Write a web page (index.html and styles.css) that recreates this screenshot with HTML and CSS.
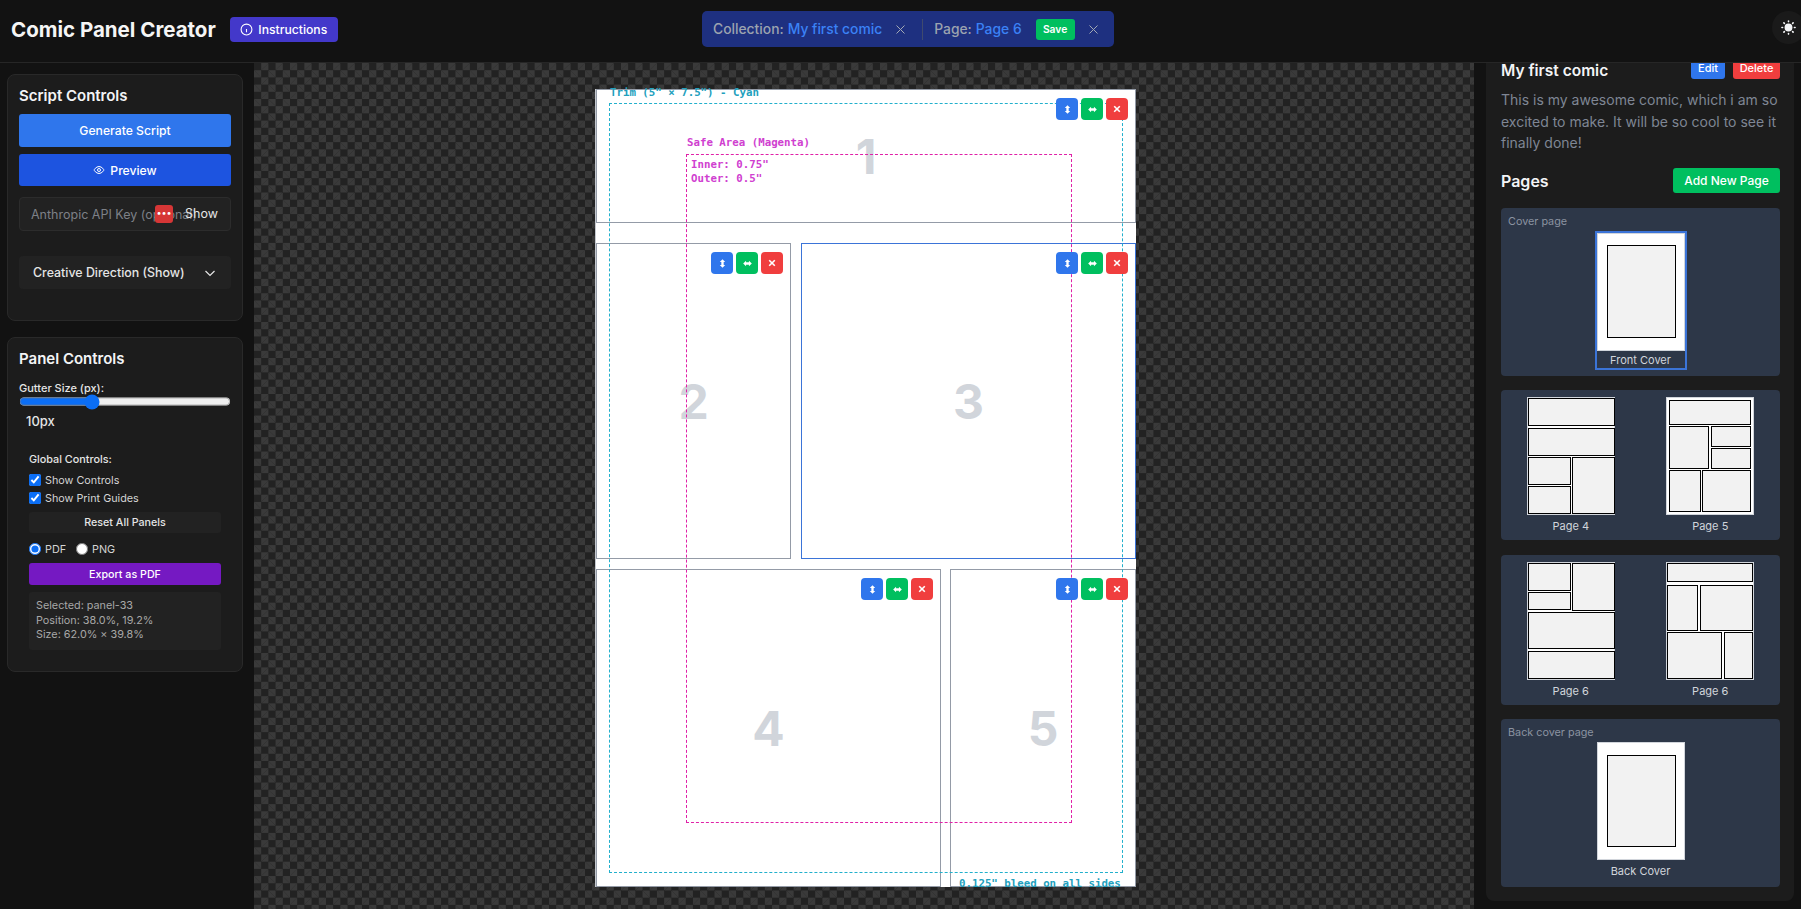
FILE: index.html
```html
<!DOCTYPE html>
<html>
<head>
    <meta charset="utf-8">
    <title>Comic Panel Creator</title>
    <link rel="stylesheet" href="styles.css">
</head>
<body>
    <svg class="sprites" width="0" height="0">
        <symbol id="i-vert" viewBox="0 0 10 10"><path d="M5 .2 8 3.400H6.300v3.200H8L5 9.800 2 6.600h1.700V3.400H2z" fill="#fff"/></symbol>
        <symbol id="i-horiz" viewBox="0 0 10 10"><path d="M.2 5 3.400 2v1.700h3.200V2L9.800 5 6.600 8V6.300H3.400V8z" fill="#fff"/></symbol>
        <symbol id="i-close" viewBox="0 0 10 10"><path d="M1.500 1.500l7 7M8.500 1.500l-7 7" stroke="#fff" stroke-width="2"/></symbol>
    </svg>

    <header class="topbar">
        <div class="brand">
            <h1>Comic Panel Creator</h1>
            <button class="btn-instructions">
                <svg width="13" height="13" viewBox="0 0 24 24" fill="none" stroke="#fff" stroke-width="2"><circle cx="12" cy="12" r="10"/><path d="M12 17v-6M12 8h.01"/></svg>
                Instructions
            </button>
        </div>
        <div class="context-bar">
            <span class="ctx-label">Collection:</span>
            <span class="ctx-value">My first comic</span>
            <svg class="ctx-x" width="9" height="9" viewBox="0 0 9 9"><path d="M.5.500l8 8M8.500.500l-8 8" stroke="#a3a9b5" stroke-width="1"/></svg>
            <span class="ctx-divider"></span>
            <span class="ctx-label">Page:</span>
            <span class="ctx-value">Page 6</span>
            <button class="btn-save">Save</button>
            <svg class="ctx-x" width="9" height="9" viewBox="0 0 9 9"><path d="M.5.500l8 8M8.500.500l-8 8" stroke="#a3a9b5" stroke-width="1"/></svg>
        </div>
        <button class="btn-theme">
            <svg width="15" height="15" viewBox="0 0 24 24" fill="#f3f4f6" stroke="#f3f4f6" stroke-width="2.600" stroke-linecap="round"><circle cx="12" cy="12" r="5"/><path d="M12 1.500v1M12 21.500v1M1.500 12h1M21.500 12h1M4.600 4.600l.8.8M18.600 18.600l.8.8M4.600 19.400l.8-.8M18.600 5.400l.8-.8"/></svg>
        </button>
    </header>

    <div class="workspace">
        <aside class="sidebar-left">
            <section class="card card-script">
                <h2>Script Controls</h2>
                <button class="btn-wide btn-generate">Generate Script</button>
                <button class="btn-wide btn-preview">
                    <svg width="12" height="12" viewBox="0 0 24 24" fill="none" stroke="#fff" stroke-width="2"><path d="M2 12s4-7 10-7 10 7 10 7-4 7-10 7-10-7-10-7z"/><circle cx="12" cy="12" r="3"/></svg>
                    Preview
                </button>
                <div class="api-key">
                    <span class="api-placeholder">Anthropic API Key (optional)</span>
                    <span class="api-dots">•••</span>
                    <span class="api-show">Show</span>
                </div>
                <div class="creative">
                    <span>Creative Direction (Show)</span>
                    <svg width="12" height="12" viewBox="0 0 12 12" fill="none" stroke="#e5e5e5" stroke-width="1.200"><path d="M1.500 4 6 8.500 10.500 4"/></svg>
                </div>
            </section>

            <section class="card card-panel">
                <h2>Panel Controls</h2>
                <label class="gutter-label">Gutter Size (px):</label>
                <input class="gutter" type="range" min="0" max="30" value="10">
                <div class="gutter-value">10px</div>
                <div class="global">
                    <div class="global-title">Global Controls:</div>
                    <label class="check"><input type="checkbox" checked> Show Controls</label>
                    <label class="check"><input type="checkbox" checked> Show Print Guides</label>
                    <button class="btn-reset">Reset All Panels</button>
                    <div class="formats">
                        <label class="check"><input type="radio" name="fmt" checked> PDF</label>
                        <label class="check"><input type="radio" name="fmt"> PNG</label>
                    </div>
                    <button class="btn-export">Export as PDF</button>
                    <div class="info">
                        <div>Selected: panel-33</div>
                        <div>Position: 38.0%, 19.2%</div>
                        <div>Size: 62.0% × 39.8%</div>
                    </div>
                </div>
            </section>
        </aside>

        <main class="canvas">
            <div class="sheet">
                <div class="panel" style="left:0;top:0;width:540px;height:134px">
                    <div class="panel-tools">
                        <button class="tool tool-v"><svg width="9" height="9"><use href="#i-vert"/></svg></button>
                        <button class="tool tool-h"><svg width="9" height="9"><use href="#i-horiz"/></svg></button>
                        <button class="tool tool-x"><svg width="8" height="8"><use href="#i-close"/></svg></button>
                    </div>
                    <span class="panel-num">1</span>
                </div>
                <div class="panel" style="left:0;top:154px;width:195px;height:316px">
                    <div class="panel-tools">
                        <button class="tool tool-v"><svg width="9" height="9"><use href="#i-vert"/></svg></button>
                        <button class="tool tool-h"><svg width="9" height="9"><use href="#i-horiz"/></svg></button>
                        <button class="tool tool-x"><svg width="8" height="8"><use href="#i-close"/></svg></button>
                    </div>
                    <span class="panel-num">2</span>
                </div>
                <div class="panel panel-selected" style="left:205px;top:154px;width:335px;height:316px">
                    <div class="panel-tools">
                        <button class="tool tool-v"><svg width="9" height="9"><use href="#i-vert"/></svg></button>
                        <button class="tool tool-h"><svg width="9" height="9"><use href="#i-horiz"/></svg></button>
                        <button class="tool tool-x"><svg width="8" height="8"><use href="#i-close"/></svg></button>
                    </div>
                    <span class="panel-num">3</span>
                </div>
                <div class="panel" style="left:0;top:480px;width:345px;height:318px">
                    <div class="panel-tools">
                        <button class="tool tool-v"><svg width="9" height="9"><use href="#i-vert"/></svg></button>
                        <button class="tool tool-h"><svg width="9" height="9"><use href="#i-horiz"/></svg></button>
                        <button class="tool tool-x"><svg width="8" height="8"><use href="#i-close"/></svg></button>
                    </div>
                    <span class="panel-num">4</span>
                </div>
                <div class="panel" style="left:354px;top:480px;width:186px;height:318px">
                    <div class="panel-tools">
                        <button class="tool tool-v"><svg width="9" height="9"><use href="#i-vert"/></svg></button>
                        <button class="tool tool-h"><svg width="9" height="9"><use href="#i-horiz"/></svg></button>
                        <button class="tool tool-x"><svg width="8" height="8"><use href="#i-close"/></svg></button>
                    </div>
                    <span class="panel-num">5</span>
                </div>

                <div class="guide-trim"></div>
                <div class="guide-safe"></div>
                <span class="guide-text trim-label">Trim (5" × 7.5") - Cyan</span>
                <span class="guide-text bleed-label">0.125" bleed on all sides</span>
                <span class="guide-text safe-label">Safe Area (Magenta)</span>
                <span class="guide-text safe-inner">Inner: 0.75"<br>Outer: 0.5"</span>
            </div>
        </main>

        <aside class="sidebar-right">
            <section class="collection">
                <div class="collection-head">
                    <h2>My first comic</h2>
                    <div class="collection-actions">
                        <button class="btn-small btn-edit">Edit</button>
                        <button class="btn-small btn-delete">Delete</button>
                    </div>
                </div>
                <p class="collection-desc">This is my awesome comic, which i am so excited to make. It will be so cool to see it finally done!</p>
                <div class="pages-head">
                    <h2>Pages</h2>
                    <button class="btn-add">Add New Page</button>
                </div>

                <div class="spread spread-cover">
                    <div class="spread-title">Cover page</div>
                    <div class="thumb-wrap thumb-current">
                        <div class="thumb"><i style="left:9px;top:11px;width:69px;height:93px"></i></div>
                        <div class="thumb-name">Front Cover</div>
                    </div>
                </div>

                <div class="spread spread-two">
                    <div class="thumb-wrap">
                        <div class="thumb">
                            <i style="left:0;top:0;width:87.300px;height:28px"></i>
                            <i style="left:0;top:30px;width:87.300px;height:28px"></i>
                            <i style="left:0;top:59px;width:43px;height:28px"></i>
                            <i style="left:0;top:88px;width:43px;height:28.300px"></i>
                            <i style="left:44px;top:59px;width:43.300px;height:57.400px"></i>
                        </div>
                        <div class="thumb-name">Page 4</div>
                    </div>
                    <div class="thumb-wrap">
                        <div class="thumb">
                            <i style="left:2px;top:2px;width:82px;height:24.600px"></i>
                            <i style="left:2px;top:28px;width:40px;height:43.200px"></i>
                            <i style="left:44px;top:28px;width:40px;height:21px"></i>
                            <i style="left:44px;top:50px;width:40px;height:21px"></i>
                            <i style="left:2px;top:72.200px;width:32px;height:41.800px"></i>
                            <i style="left:35px;top:72.200px;width:49px;height:41.800px"></i>
                        </div>
                        <div class="thumb-name">Page 5</div>
                    </div>
                </div>

                <div class="spread spread-two">
                    <div class="thumb-wrap">
                        <div class="thumb">
                            <i style="left:0;top:0;width:43px;height:28px"></i>
                            <i style="left:44px;top:0;width:43.300px;height:48.200px"></i>
                            <i style="left:0;top:29px;width:43px;height:18.200px"></i>
                            <i style="left:0;top:49.300px;width:87.300px;height:36.800px"></i>
                            <i style="left:0;top:88px;width:87.300px;height:28px"></i>
                        </div>
                        <div class="thumb-name">Page 6</div>
                    </div>
                    <div class="thumb-wrap">
                        <div class="thumb">
                            <i style="left:0;top:0;width:86px;height:19.200px"></i>
                            <i style="left:0;top:22.300px;width:31px;height:45.900px"></i>
                            <i style="left:33px;top:22.300px;width:53px;height:45.900px"></i>
                            <i style="left:0;top:69.200px;width:55px;height:46.900px"></i>
                            <i style="left:57px;top:69.200px;width:29px;height:46.900px"></i>
                        </div>
                        <div class="thumb-name">Page 6</div>
                    </div>
                </div>

                <div class="spread spread-cover">
                    <div class="spread-title">Back cover page</div>
                    <div class="thumb-wrap">
                        <div class="thumb"><i style="left:9px;top:11.800px;width:69px;height:92.100px"></i></div>
                        <div class="thumb-name">Back Cover</div>
                    </div>
                </div>
            </section>
        </aside>
    </div>
</body>
</html>
```

FILE: styles.css
```css
* {
    margin: 0;
    padding: 0;
    box-sizing: border-box;
}
html, body {
    height: 100%;
    overflow: hidden;
}
body {
    background-color: #121212;
    color: #f3f4f6;
    font-family: Inter, "Liberation Sans", sans-serif;
    display: flex;
    flex-direction: column;
}
button {
    font-family: inherit;
    border: none;
    color: #fff;
}
.sprites {
    position: absolute;
}

/* top bar */
.topbar {
    height: 63px;
    flex-shrink: 0;
    display: flex;
    align-items: center;
    justify-content: space-between;
    padding: 0 0 3px 11px;
    border-bottom: 1px solid #262626;
    background-color: #121212;
    position: relative;
    z-index: 2;
}
.brand {
    display: flex;
    align-items: center;
    gap: 14px;
}
.brand h1 {
    font-size: 20.500px;
    font-weight: 700;
    color: #f5f5f5;
}
.btn-instructions {
    height: 25px;
    width: 108px;
    display: flex;
    align-items: center;
    justify-content: center;
    gap: 5px;
    font-size: 12.200px;
    font-weight: 500;
    background-color: #4338ca;
    border-radius: 4px;
}
.context-bar {
    position: absolute;
    left: 702px;
    top: 11px;
    width: 412px;
    height: 36px;
    display: flex;
    align-items: center;
    padding-left: 11px;
    font-size: 13.850px;
    font-weight: 500;
    background-color: #1e3080;
    border-radius: 5px;
}
.ctx-label {
    color: #9ca3af;
    margin-right: 4px;
}
.ctx-value {
    color: #3b82f6;
}
.ctx-x {
    margin-left: 14px;
}
.ctx-divider {
    width: 1px;
    height: 21px;
    background-color: #3f4a6e;
    margin: 0 11px 0 17px;
}
.btn-save {
    margin-left: 14px;
    width: 39px;
    height: 21px;
    font-size: 10.300px;
    font-weight: 600;
    background-color: #00bf5f;
    border-radius: 3px;
}
.btn-theme {
    position: absolute;
    left: 1772px;
    top: 11px;
    width: 33px;
    height: 33px;
    border-radius: 50%;
    background-color: #1a1a1a;
    display: flex;
    align-items: center;
    justify-content: center;
}

/* layout */
.workspace {
    flex: 1;
    display: flex;
    min-height: 0;
}
.sidebar-left {
    width: 254px;
    flex-shrink: 0;
    padding: 11px 11px 0 7px;
    display: flex;
    flex-direction: column;
    gap: 16px;
}
.card {
    background-color: #1c1c1c;
    border: 1px solid #292929;
    border-radius: 8px;
    padding: 11px 11px 0;
}
.card h2 {
    font-size: 15px;
    font-weight: 600;
    line-height: 20px;
    color: #f3f4f6;
}
.card-script {
    height: 247px;
}
.card-panel {
    height: 335px;
}

/* script controls */
.btn-wide {
    display: flex;
    align-items: center;
    justify-content: center;
    gap: 5px;
    width: 100%;
    font-size: 12.200px;
    font-weight: 500;
    border-radius: 3px;
}
.btn-generate {
    height: 33px;
    margin-top: 8px;
    background-color: #2f76ec;
}
.btn-preview {
    height: 32px;
    margin-top: 7px;
    background-color: #1d54e0;
}
.api-key {
    position: relative;
    height: 34px;
    margin-top: 11px;
    padding-left: 11px;
    display: flex;
    align-items: center;
    font-size: 12.500px;
    white-space: nowrap;
    overflow: hidden;
    background-color: #222;
    border: 1px solid #2c2c2c;
    border-radius: 4px;
}
.api-placeholder {
    color: #7d8087;
}
.api-dots {
    position: absolute;
    left: 135px;
    top: 7px;
    width: 18px;
    height: 18px;
    font-size: 9px;
    line-height: 16px;
    text-align: center;
    color: #fff;
    background-color: #d63636;
    border-radius: 3px;
}
.api-show {
    position: absolute;
    right: 12px;
    top: 8px;
    color: #e5e5e5;
}
.creative {
    height: 33px;
    margin-top: 25px;
    padding: 0 15px 0 14px;
    display: flex;
    align-items: center;
    justify-content: space-between;
    font-size: 12.400px;
    font-weight: 500;
    color: #e5e5e5;
    background-color: #222;
    border-radius: 4px;
}

/* panel controls */
.gutter-label {
    display: block;
    margin-top: 12px;
    font-size: 11px;
    font-weight: 500;
    color: #e5e5e5;
}
.gutter {
    display: block;
    width: 212px;
    height: 13px;
    accent-color: #0b6ef5;
}
.gutter-value {
    margin: 5px 0 0 7px;
    font-size: 13px;
    font-weight: 500;
    color: #e5e5e5;
}
.global {
    margin: 24px 10px 0;
}
.global-title {
    font-size: 10.800px;
    font-weight: 500;
    color: #e5e5e5;
    margin-bottom: 5px;
}
.check {
    display: flex;
    align-items: center;
    gap: 4px;
    height: 18px;
    font-size: 10.800px;
    color: #d4d4d4;
}
.check input {
    width: 12px;
    height: 12px;
    margin: 0;
    accent-color: #0b6ef5;
}
.btn-reset {
    display: block;
    width: 100%;
    height: 21px;
    margin-top: 5px;
    font-size: 10.700px;
    font-weight: 500;
    color: #e5e5e5;
    background-color: #222;
    border-radius: 3px;
}
.formats {
    display: flex;
    gap: 10px;
    margin-top: 7px;
}
.btn-export {
    display: block;
    width: 100%;
    height: 22px;
    margin-top: 5px;
    font-size: 10.700px;
    font-weight: 500;
    background-color: #7519c2;
    border-radius: 3px;
}
.info {
    margin-top: 7px;
    height: 58px;
    padding: 7px 7px;
    font-size: 10.800px;
    line-height: 14.500px;
    color: #a8a8a8;
    background-color: #222;
    border-radius: 3px;
}

/* canvas */
.canvas {
    flex: 1;
    min-width: 0;
    position: relative;
    background-color: #222;
    background-image:
        linear-gradient(45deg, #3a3a3a 25%, transparent 25%),
        linear-gradient(-45deg, #3a3a3a 25%, transparent 25%),
        linear-gradient(45deg, transparent 75%, #3a3a3a 75%),
        linear-gradient(-45deg, transparent 75%, #3a3a3a 75%);
    background-size: 14.400px 14.400px;
    background-position: 0 0, 0 7.200px, 7.200px -7.200px, -7.200px 0;
    overflow: hidden;
}
.sheet {
    position: absolute;
    left: 342px;
    top: 26px;
    width: 540px;
    height: 798px;
    background-color: #fff;
    box-shadow: -1px 0 0 #c4c8ce;
}
.panel {
    position: absolute;
    border: 1px solid #949ba7;
}
.panel-selected {
    border-color: #3b74d8;
}
.panel-tools {
    position: absolute;
    top: 8px;
    right: 7px;
    display: flex;
    gap: 3px;
    z-index: 3;
}
.tool {
    width: 22px;
    height: 22px;
    border-radius: 4px;
    display: flex;
    align-items: center;
    justify-content: center;
}
.tool-v {
    background-color: #2f76ec;
}
.tool-h {
    background-color: #00bf5f;
}
.tool-x {
    background-color: #f03e3e;
}
.panel-num {
    position: absolute;
    left: 50%;
    top: 50%;
    transform: translate(-50%, -50%);
    font-size: 48px;
    font-weight: 700;
    color: #d1d5db;
}
.guide-trim {
    position: absolute;
    left: 13px;
    top: 14px;
    width: 514px;
    height: 770px;
    border: 1px dashed #22b0cc;
    pointer-events: none;
}
.guide-safe {
    position: absolute;
    left: 90px;
    top: 65px;
    width: 386px;
    height: 669px;
    border: 1px dashed #e020a8;
    pointer-events: none;
}
.guide-text {
    position: absolute;
    font-family: "DejaVu Sans Mono", monospace;
    font-size: 10.750px;
    font-weight: 700;
    white-space: nowrap;
}
.trim-label {
    left: 14px;
    top: -3px;
    color: #22a0bd;
}
.bleed-label {
    left: 363px;
    top: 788px;
    height: 10px;
    line-height: 13px;
    overflow: hidden;
    color: #22a0bd;
}
.safe-label {
    left: 91px;
    top: 47px;
    color: #d040d0;
}
.safe-inner {
    left: 95px;
    top: 69px;
    line-height: 14px;
    color: #d040d0;
}

/* right column */
.sidebar-right {
    width: 327px;
    flex-shrink: 0;
    padding: 0 7px 8px 12px;
    overflow: hidden;
}
.collection {
    height: 838px;
    padding: 0 14px 0 15px;
    background-color: #1c1c1c;
    border-radius: 0 0 8px 8px;
}
.collection-head {
    display: flex;
    align-items: flex-start;
    justify-content: space-between;
    height: 26px;
}
.collection-head h2 {
    font-size: 15.500px;
    font-weight: 600;
    line-height: 15px;
}
.collection-actions {
    display: flex;
    gap: 8px;
    margin-top: -7px;
}
.btn-small {
    height: 23px;
    font-size: 11px;
    font-weight: 500;
    border-radius: 3px;
}
.btn-edit {
    width: 34px;
    background-color: #2f76ec;
}
.btn-delete {
    width: 47px;
    background-color: #f03e3e;
}
.collection-desc {
    font-size: 14px;
    line-height: 21.500px;
    color: #7f8694;
}
.pages-head {
    display: flex;
    align-items: center;
    justify-content: space-between;
    height: 25px;
    margin-top: 14.500px;
}
.pages-head h2 {
    font-size: 16px;
    font-weight: 600;
}
.btn-add {
    width: 107px;
    height: 25px;
    font-size: 12px;
    font-weight: 500;
    background-color: #00bf5f;
    border-radius: 3px;
}
.spread {
    margin-top: 14.500px;
    background-color: #2d3748;
    border-radius: 4px;
    padding-top: 7px;
}
.spread-cover {
    height: 168px;
}
.spread-two {
    height: 150px;
    display: grid;
    grid-template-columns: 1fr 1fr;
}
.spread-title {
    padding-left: 7px;
    margin-bottom: 2px;
    font-size: 10.800px;
    line-height: 14px;
    color: #8b93a1;
}
.thumb-wrap {
    width: 88px;
    margin: 0 auto;
}
.thumb-current {
    width: 92px;
    border: 2px solid #3b74d8;
}
.thumb {
    position: relative;
    width: 88px;
    height: 118px;
    background-color: #fff;
    border: 1px solid #d1d5db;
}
.thumb i {
    position: absolute;
    background-color: #f2f2f2;
    border: 1px solid #000;
}
.thumb-name {
    height: 19px;
    margin-top: 2px;
    font-size: 11px;
    line-height: 19px;
    text-align: center;
    white-space: nowrap;
    color: #d1d5db;
}
.thumb-current .thumb-name {
    height: 17px;
    margin-top: 0;
    line-height: 18px;
}
```
